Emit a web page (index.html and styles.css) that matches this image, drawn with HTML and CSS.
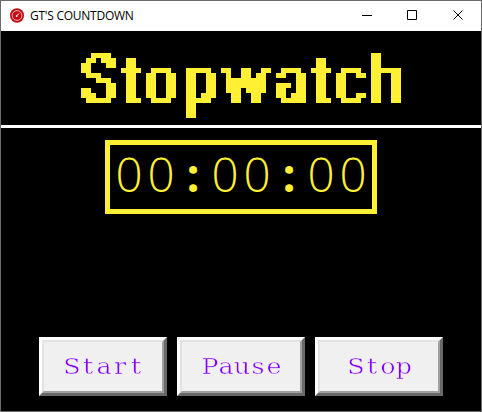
FILE: index.html
```html
<!DOCTYPE html>
<html lang="en">
<head>
<meta charset="utf-8">
<title>GT'S COUNTDOWN</title>
<link rel="stylesheet" href="styles.css">
</head>
<body>
<div class="window">
  <header class="titlebar">
    <svg class="app-icon" viewBox="0 0 14 15" width="14" height="15"><ellipse cx="7" cy="7.5" rx="7" ry="7.3" fill="#c00d14"/><circle cx="7" cy="7.5" r="4.9" fill="none" stroke="#f3b5b7" stroke-width="1"/><path d="M6.8 7.8 9 5.4" stroke="#fff" stroke-width="1"/><circle cx="6.6" cy="8.1" r=".9" fill="#fff"/></svg>
    <span class="caption">GT'S COUNTDOWN</span>
    <div class="controls">
      <svg viewBox="0 0 46 30"><path d="M8 14.5h10"/></svg>
      <svg viewBox="0 0 46 30"><path d="M7.5 9.5h9v9h-9z"/></svg>
      <svg viewBox="0 0 46 30"><path d="M7.5 9.5l9 9M16.5 9.5l-9 9"/></svg>
    </div>
  </header>
  <h1 class="heading">
    <svg class="pixel-text" viewBox="0 0 480 94" width="480" height="94">
      <defs>
        <filter id="pixels" filterUnits="userSpaceOnUse" x="0" y="0" width="480" height="94" color-interpolation-filters="sRGB">
          <feMorphology in="SourceGraphic" operator="dilate" radius="2 0" result="thick"/>
          <feFlood x="2" y="4" width="1" height="1" flood-color="#000"/>
          <feComposite x="0" y="2" width="5" height="5" in2="SourceGraphic" operator="over"/>
          <feTile result="grid"/>
          <feComposite in="thick" in2="grid" operator="in"/>
          <feComponentTransfer><feFuncA type="discrete" tableValues="0 1"/></feComponentTransfer>
          <feMorphology operator="dilate" radius="2"/>
        </filter>
      </defs>
      <g filter="url(#pixels)"><text y="72"><tspan x="80" textLength="35" lengthAdjust="spacingAndGlyphs">S</tspan><tspan x="122" textLength="18" lengthAdjust="spacingAndGlyphs">t</tspan><tspan x="144.7" textLength="30.6" lengthAdjust="spacingAndGlyphs">o</tspan><tspan x="183.1" textLength="32" lengthAdjust="spacingAndGlyphs">p</tspan><tspan x="221.2" textLength="47" lengthAdjust="spacingAndGlyphs">w</tspan><tspan x="274" textLength="32" lengthAdjust="spacingAndGlyphs">a</tspan><tspan x="312" textLength="18" lengthAdjust="spacingAndGlyphs">t</tspan><tspan x="334.7" textLength="30" lengthAdjust="spacingAndGlyphs">c</tspan><tspan x="367.9" textLength="34" lengthAdjust="spacingAndGlyphs">h</tspan></text></g>
    </svg>
  </h1>
  <main class="content">
    <div class="display"><span>0</span><span>0</span><span class="colon">:</span><span>0</span><span>0</span><span class="colon">:</span><span>0</span><span>0</span></div>
    <div class="actions">
      <button><span>S</span><span>t</span><span>a</span><span>r</span><span>t</span></button>
      <button><span>P</span><span>a</span><span>u</span><span>s</span><span>e</span></button>
      <button><span>S</span><span>t</span><span>o</span><span>p</span></button>
    </div>
  </main>
</div>
</body>
</html>
```
FILE: styles.css
```css
* { box-sizing: border-box; }
body { margin: 0; }
.window { width: 482px; height: 412px; border: 1px solid #6b6b6b; background: #000; display: flex; flex-direction: column; }
.titlebar { height: 30px; flex: none; background: #fff; display: flex; align-items: center; padding-left: 9px; }
.app-icon { flex: none; margin: -2px 6px 0 0; }
.caption { font: 12px/30px "Open Sans", sans-serif; color: #000; letter-spacing: -.25px; white-space: nowrap; }
.controls { margin-left: auto; display: flex; width: 127px; overflow: hidden; }
.controls svg { width: 46px; height: 30px; flex: none; fill: none; stroke: #000; stroke-width: 1; }
.heading { margin: 0; height: 97px; flex: none; border-bottom: 3px solid #fff; }
.pixel-text { display: block; fill: #fff033; font: 400 68px Roboto, sans-serif; }
.content { flex: 1; display: flex; flex-direction: column; align-items: center; padding: 12px 0 15px; justify-content: space-between; }
.display { width: 272px; height: 74px; border: 5px solid #fff033; color: #fff033; display: flex; justify-content: center; font: 300 47.5px/58px "Open Sans", sans-serif; }
.display span { width: 32px; text-align: center; }
.display .colon { font: 700 46px/59px "Open Sans", sans-serif; }
.actions { display: flex; gap: 10px; }
button { width: 128px; height: 59px; padding: 0 0 0 1px; border: 3px solid; border-color: #fff #696969 #696969 #fff; background: #f0f0f0; color: #8000ff; font: 22.5px/53px "DejaVu Serif", serif; display: flex; justify-content: center; position: relative; -webkit-text-stroke: .5px #f0f0f0; }
button::after { content: ""; position: absolute; inset: 0; border: 2px solid; border-color: #e3e3e3 #a0a0a0 #a0a0a0 #e3e3e3; }
button span { width: 16px; display: flex; justify-content: center; transform: scaleX(1.13); }
```
